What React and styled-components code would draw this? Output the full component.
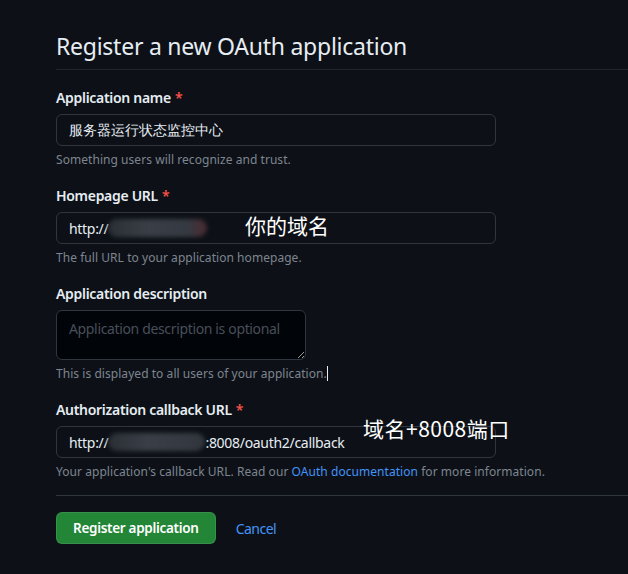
import React from 'react';
import styled, { createGlobalStyle } from 'styled-components';

const GlobalStyle = createGlobalStyle`
  body {
    margin: 0;
    background-color: #0d1117;
    font-family: 'Noto Sans', 'Liberation Sans', sans-serif;
    color: #e6edf3;
  }
`;

const Page = styled.main`
  padding: 31px 0 40px 56px;
`;

const Header = styled.div`
  padding-bottom: 8px;
  border-bottom: 1px solid #21262d;
  margin-bottom: 18px;
`;

const Title = styled.h1`
  margin: 0;
  font-size: 23px;
  line-height: 30px;
  font-weight: 400;
  letter-spacing: -0.25px;
  color: #e6edf3;
`;

const Form = styled.form`
  display: flex;
  flex-direction: column;
  gap: 17px;
`;

const Group = styled.div`
  position: relative;
  display: flex;
  flex-direction: column;
  align-items: flex-start;
`;

const Label = styled.label`
  font-size: 14px;
  line-height: 20px;
  font-weight: 600;
  letter-spacing: -0.3px;
  color: #e6edf3;
  margin-bottom: 6px;
`;

const Required = styled.span`
  color: #f85149;
  margin-left: 4px;
`;

const Field = styled.div`
  box-sizing: border-box;
  width: 440px;
  height: 32px;
  padding: 0 12px;
  display: flex;
  align-items: center;
  border: 1px solid #30363d;
  border-radius: 6px;
  background-color: #0d1117;
  font-size: 14px;
  letter-spacing: ${(p) => (p.$cjk ? 0 : -0.3)}px;
  color: #e6edf3;
  white-space: nowrap;
`;

const TextArea = styled.textarea`
  box-sizing: border-box;
  width: 250px;
  height: 50px;
  padding: 8px 12px;
  border: 1px solid #30363d;
  border-radius: 6px;
  background-color: #010409;
  color: #e6edf3;
  font-family: inherit;
  font-size: 14px;
  line-height: 20px;
  letter-spacing: -0.35px;
  resize: both;
  outline: none;

  &::placeholder {
    color: #484f58;
  }
`;

const Hint = styled.p`
  margin: 5px 0 0;
  font-size: 12px;
  line-height: 18px;
  letter-spacing: 0.05px;
  color: #7d8590;
`;

const Link = styled.a`
  color: #4493f8;
  text-decoration: none;
`;

const CancelLink = styled(Link)`
  font-size: 14px;
  letter-spacing: -0.5px;
`;

const Blur = styled.span`
  display: inline-block;
  width: ${(p) => p.$w}px;
  height: 18px;
  border-radius: 9px;
  background: linear-gradient(90deg, #2a2f36, #3a3f47 40%, #353a42 80%, ${(p) => (p.$red ? '#4a2a30' : '#30353c')});
  filter: blur(2px);
`;

const Caret = styled.span`
  display: inline-block;
  width: 1px;
  height: 15px;
  background: #e6edf3;
  vertical-align: -3px;
`;

const Note = styled.span`
  position: absolute;
  left: ${(p) => p.$left}px;
  top: ${(p) => p.$top}px;
  font-family: 'Noto Sans CJK SC', 'Noto Sans', sans-serif;
  font-size: 21px;
  line-height: 24px;
  letter-spacing: ${(p) => p.$spacing || 0}px;
  color: #ffffff;
  white-space: nowrap;
`;

const Divider = styled.hr`
  margin: 14px 0 16px;
  border: 0;
  border-top: 1px solid #30363d;
`;

const Actions = styled.div`
  display: flex;
  align-items: center;
  gap: 20px;
`;

const PrimaryButton = styled.button`
  height: 32px;
  padding: 0 16px;
  border: 1px solid rgba(240, 246, 252, 0.1);
  border-radius: 6px;
  background-color: #238636;
  color: #ffffff;
  font-family: inherit;
  font-size: 13.5px;
  font-weight: 600;
  letter-spacing: -0.3px;
`;

const App = () => {
  return (
    <Page>
      <GlobalStyle />
      <Header>
        <Title>Register a new OAuth application</Title>
      </Header>
      <Form>
        <Group>
          <Label>Application name<Required>*</Required></Label>
          <Field $cjk>服务器运行状态监控中心</Field>
          <Hint>Something users will recognize and trust.</Hint>
        </Group>
        <Group>
          <Label>Homepage URL<Required>*</Required></Label>
          <Field>
            http://<Blur $w={99} $red />
          </Field>
          <Note $left={189} $top={27}>你的域名</Note>
          <Hint>The full URL to your application homepage.</Hint>
        </Group>
        <Group>
          <Label>Application description</Label>
          <TextArea placeholder="Application description is optional" />
          <Hint>This is displayed to all users of your application.<Caret /></Hint>
        </Group>
        <Group>
          <Label>Authorization callback URL<Required>*</Required></Label>
          <Field>
            http://<Blur $w={97} />:8008/oauth2/callback
          </Field>
          <Note $left={307} $top={16} $spacing={0.5}>域名+8008端口</Note>
          <Hint>
            Your application's callback URL. Read our <Link href="#">OAuth documentation</Link> for more information.
          </Hint>
        </Group>
      </Form>
      <Divider />
      <Actions>
        <PrimaryButton type="button">Register application</PrimaryButton>
        <CancelLink href="#">Cancel</CancelLink>
      </Actions>
    </Page>
  );
};

export default App;
